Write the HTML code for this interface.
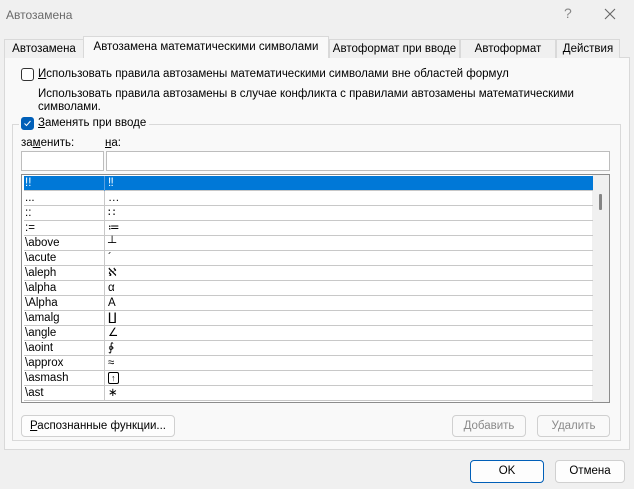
<!DOCTYPE html>
<html><head><meta charset="utf-8"><style>
*{box-sizing:border-box;margin:0;padding:0}
body{width:634px;height:489px;background:#f0f0f0;font-family:"Liberation Sans",sans-serif;font-size:11.5px;color:#000;position:relative;overflow:hidden}
.a{position:absolute;white-space:nowrap}
.tab{position:absolute;top:39px;height:19px;border:1px solid #d9d9d9;border-bottom:none;background:#f0f0f0;text-align:center;line-height:18px}
.sel{top:36px;height:22px;background:#f9f9f9;z-index:2;line-height:21px}
.panel{position:absolute;left:4px;top:57px;width:626px;height:393px;background:#f9f9f9;border:1px solid #d9d9d9}
.cb{position:absolute;width:13px;height:13px;border:1px solid #333;border-radius:3px;background:#fff}
.btn{position:absolute;height:22px;border:1px solid #d0d0d0;border-radius:4px;background:#fdfdfd;text-align:center;line-height:20px}
.row{position:absolute;left:2px;width:569px;height:15px;border-bottom:1px solid #c8c8c8;line-height:14px}
.row span{position:absolute;left:1px}
.row b{font-weight:normal;position:absolute;left:84px}
.row i{position:absolute;left:80px;top:0;bottom:-1px;border-left:1px solid #c8c8c8}
u{text-decoration:underline}
</style></head><body>
<div class="a" style="left:6px;top:8px;color:#6a6a6a;font-size:12px">Автозамена</div>
<div class="a" style="left:564px;top:5px;color:#888;font-size:14px">?</div>
<svg class="a" style="left:604px;top:8px" width="12" height="12"><path d="M1 1L11 11M11 1L1 11" stroke="#666" stroke-width="1.1"/></svg>
<div class="panel"></div>
<div class="tab" style="left:4px;width:80px">Автозамена</div>
<div class="tab sel" style="left:83px;width:246px">Автозамена математическими символами</div>
<div class="tab" style="left:329px;width:131px">Автоформат при вводе</div>
<div class="tab" style="left:460px;width:96px">Автоформат</div>
<div class="tab" style="left:556px;width:64px">Действия</div>
<div class="cb" style="left:21px;top:68px"></div>
<div class="a" style="left:38px;top:68px"><u>И</u>спользовать правила автозамены математическими символами вне областей формул</div>
<div class="a" style="left:38px;top:88px;line-height:13px">Использовать правила автозамены в случае конфликта с правилами автозамены математическими<br>символами.</div>
<div class="a" style="left:12px;top:124px;width:609px;height:317px;border:1px solid #d9d9d9"></div>
<div class="a" style="left:19px;top:116px;width:130px;height:14px;background:#f9f9f9"></div>
<div class="cb" style="left:21px;top:117px;background:#005fb8;border-color:#005fb8"><svg width="11" height="11" style="position:absolute;left:0;top:0"><path d="M2.5 5.5L4.5 7.5L8.5 3" stroke="#fff" stroke-width="1" fill="none"/></svg></div>
<div class="a" style="left:38px;top:117px"><u>З</u>аменять при вводе</div>
<div class="a" style="left:21px;top:137px">за<u>м</u>енить:</div>
<div class="a" style="left:105px;top:137px"><u>н</u>а:</div>
<div class="a" style="left:21px;top:151px;width:83px;height:20px;border:1px solid #bdbdbd;background:#fff"></div>
<div class="a" style="left:106px;top:151px;width:504px;height:20px;border:1px solid #bdbdbd;background:#fff"></div>
<div class="a" style="left:21px;top:174px;width:589px;height:229px;border:1px solid #8c8c8c;background:#fff;overflow:hidden">
<div class="a" style="right:0;top:0;width:17px;height:227px;background:#f0f0f0"></div>
<div class="a" style="right:7px;top:19px;width:3px;height:16px;background:#858585;border-radius:1px"></div>
<div class="row" style="top:1px;background:#0078d7;color:#fff"><span>!!</span><i style="border-color:#5aa0e0"></i><b>‼</b></div>
<div class="row" style="top:16px"><span>...</span><i></i><b>…</b></div>
<div class="row" style="top:31px"><span>::</span><i></i><b>∷</b></div>
<div class="row" style="top:46px"><span>:=</span><i></i><b>≔</b></div>
<div class="row" style="top:61px"><span>\above</span><i></i><b>┴</b></div>
<div class="row" style="top:76px"><span>\acute</span><i></i><b>´</b></div>
<div class="row" style="top:91px"><span>\aleph</span><i></i><b>ℵ</b></div>
<div class="row" style="top:106px"><span>\alpha</span><i></i><b>α</b></div>
<div class="row" style="top:121px"><span>\Alpha</span><i></i><b>Α</b></div>
<div class="row" style="top:136px"><span>\amalg</span><i></i><b>∐</b></div>
<div class="row" style="top:151px"><span>\angle</span><i></i><b>∠</b></div>
<div class="row" style="top:166px"><span>\aoint</span><i></i><b>∳</b></div>
<div class="row" style="top:181px"><span>\approx</span><i></i><b>≈</b></div>
<div class="row" style="top:196px"><span>\asmash</span><i></i><b style="border:1px solid #000;border-radius:2px;font-size:9px;line-height:10px;padding:0 2px;top:1px">↑</b></div>
<div class="row" style="top:211px"><span>\ast</span><i></i><b>∗</b></div>
</div>
<div class="btn" style="left:21px;top:415px;width:154px"><u>Р</u>аспознанные функции...</div>
<div class="btn" style="left:452px;top:415px;width:74px;color:#8a8a8a;background:#f9f9f9">Добавить</div>
<div class="btn" style="left:537px;top:415px;width:73px;color:#8a8a8a;background:#f9f9f9">Удалить</div>
<div class="btn" style="left:470px;top:460px;width:74px;border-color:#005fb8;height:23px;line-height:21px">OK</div>
<div class="btn" style="left:555px;top:460px;width:70px;height:23px;line-height:21px">Отмена</div>
</body></html>
